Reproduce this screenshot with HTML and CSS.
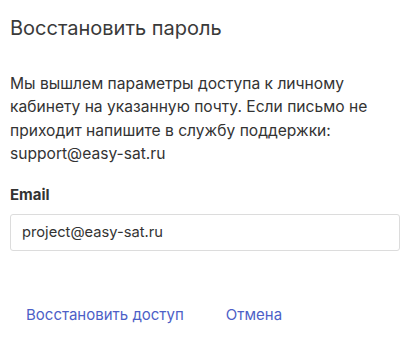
FILE: index.html
```html
<!DOCTYPE html>
<html lang="ru">
<head>
<meta charset="utf-8">
<link rel="stylesheet" href="styles.css">
</head>
<body>
<div class="modal">
  <h1 class="title">Восстановить пароль</h1>
  <p class="desc">Мы вышлем параметры доступа к личному кабинету на указанную почту. Если письмо не приходит напишите в службу поддержки: support@easy-sat.ru</p>
  <label class="label" for="email">Email</label>
  <input class="input" id="email" type="text" value="project@easy-sat.ru">
  <div class="actions">
    <button class="btn">Восстановить доступ</button>
    <button class="btn">Отмена</button>
  </div>
</div>
</body>
</html>
```
FILE: styles.css
```css
html, body { margin: 0; padding: 0; background: #fff; }
body { font-family: Inter, "Noto Sans", sans-serif; color: #333; }
.modal { width: 390px; padding: 0 10px; }
.title { margin: 0; padding-top: 14px; font-size: 20px; font-weight: 400; line-height: 28px; color: #3a3a3a; }
.desc { margin: 30px 0 0; font-size: 15.6px; line-height: 23.4px; color: #333; }
.label { display: block; margin-top: 19px; font-size: 15px; font-weight: 700; line-height: 20px; color: #333; }
.input { display: block; box-sizing: border-box; width: 390px; height: 37px; margin-top: 9px; padding: 0 11px; border: 1px solid #dcdcdc; border-radius: 3px; font-family: inherit; font-size: 14.7px; color: #333; outline: none; }
.actions { display: flex; gap: 10px; margin-top: 50px; }
.btn { background: none; border: 0; padding: 4px 16px; font-family: inherit; font-size: 15px; line-height: 20px; color: #4d5fc7; cursor: pointer; }
```
